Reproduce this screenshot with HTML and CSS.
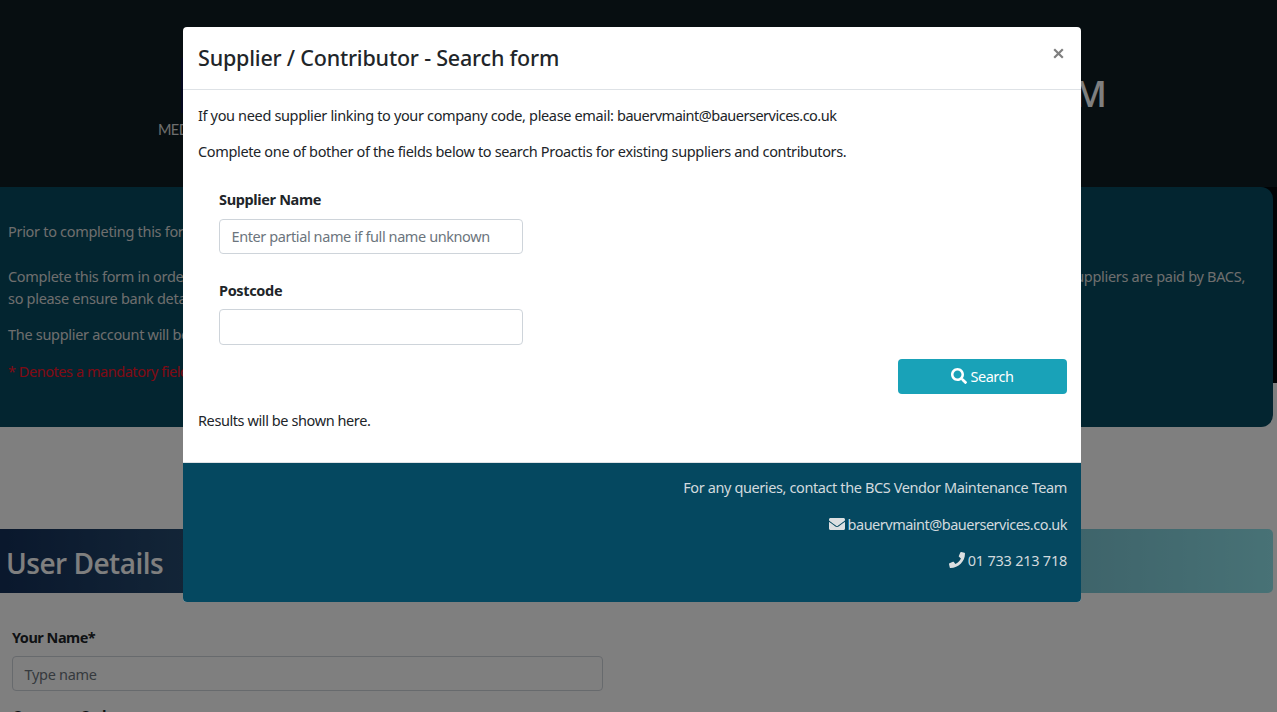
FILE: index.html
```html
<!DOCTYPE html>
<html lang="en">
<head>
<meta charset="utf-8">
<title>Supplier form</title>
<link rel="stylesheet" href="styles.css">
</head>
<body>
<div class="page">
  <div class="hero">
    <header class="banner">
      <div class="brand"><div class="brand-mark"></div><div class="brand-name">MEDIA</div></div>
      <h1 class="banner-title">FORM</h1>
    </header>
    <section class="intro">
      <p class="intro-first">Prior to completing this form</p>
      <p class="intro-wide"><span>Complete this form in order<br>so please ensure bank details</span><span class="paid">suppliers are paid by BACS,</span></p>
      <p>The supplier account will be</p>
      <p class="mandatory">* Denotes a mandatory field</p>
    </section>
  </div>
  <h2 class="section-bar"><span>User Details</span></h2>
  <form class="details">
    <label class="field-label">Your Name*</label>
    <div class="field"><span class="ph-name">Type name</span></div>
    <label class="field-label next-label">Company Code</label>
  </form>
</div>
<div class="backdrop">
  <div class="modal">
    <div class="modal-header">
      <h5 class="modal-title"><span>Supplier / Contributor - Search form</span></h5>
      <svg class="close" viewBox="0 0 11 11"><path d="M1.2 1.2 9.8 9.8M9.8 1.2 1.2 9.8"/></svg>
    </div>
    <div class="modal-body">
      <p><span class="t-link">If you need supplier linking to your company code, please email: </span><span class="t-mail">bauervmaint@bauerservices.co.uk</span></p>
      <p><span class="t-complete">Complete one of bother of the fields below to search Proactis for existing suppliers and contributors.</span></p>
      <div class="search-fields">
        <label class="field-label">Supplier Name</label>
        <div class="field"><span class="ph-partial">Enter partial name if full name unknown</span></div>
        <label class="field-label second">Postcode</label>
        <div class="field tall"></div>
      </div>
      <div class="button"><svg class="ico-search" viewBox="0 0 512 512"><path d="M505 442.700 405.300 343c-4.500-4.500-10.600-7-17-7H372c27.600-35.300 44-79.700 44-128C416 93.100 322.900 0 208 0S0 93.100 0 208s93.100 208 208 208c48.300 0 92.700-16.400 128-44v16.300c0 6.400 2.500 12.500 7 17l99.700 99.700c9.400 9.400 24.600 9.400 33.900 0l28.300-28.300c9.400-9.400 9.400-24.600.1-34zM208 336c-70.700 0-128-57.200-128-128 0-70.700 57.200-128 128-128 70.700 0 128 57.200 128 128 0 70.700-57.200 128-128 128z"/></svg><span class="t-search">Search</span></div>
      <p class="results"><span class="t-results">Results will be shown here.</span></p>
    </div>
    <div class="modal-footer">
      <p><span class="t-query">For any queries, contact the BCS Vendor Maintenance Team</span></p>
      <p><svg class="ico" viewBox="0 0 512 512"><path d="M502.300 190.800c3.900-3.100 9.700-.2 9.700 4.700V400c0 26.500-21.500 48-48 48H48c-26.500 0-48-21.500-48-48V195.600c0-5 5.700-7.800 9.700-4.700 22.400 17.400 52.100 39.500 154.100 113.600 21.100 15.400 56.700 47.800 92.200 47.600 35.700.3 72-32.800 92.300-47.600 102-74.100 131.600-96.300 154-113.700zM256 320c23.200.4 56.600-29.200 73.400-41.400 132.700-96.300 142.800-104.700 173.400-128.700 5.800-4.500 9.200-11.500 9.200-18.900v-19c0-26.500-21.500-48-48-48H48c-26.500 0-48 21.500-48 48v19c0 7.400 3.400 14.300 9.200 18.900 30.600 23.900 40.700 32.400 173.400 128.700 16.800 12.200 50.200 41.800 73.400 41.400z"/></svg><span class="t-mail">bauervmaint@bauerservices.co.uk</span></p>
      <p><svg class="ico" viewBox="0 0 512 512"><path d="M493.400 24.600l-104-24c-11.300-2.600-22.900 3.300-27.500 13.900l-48 112c-4.200 9.800-1.400 21.300 6.900 28l60.600 49.600c-36 76.700-98.900 140.500-177.200 177.200l-49.600-60.600c-6.800-8.300-18.200-11.100-28-6.900l-112 48C3.900 366.500-2 378.100.6 389.400l24 104C27.100 504.200 36.700 512 48 512c256.100 0 464-207.500 464-464 0-11.200-7.700-20.900-18.600-23.400z"/></svg><span class="t-phone">01 733 213 718</span></p>
    </div>
  </div>
</div>
</body>
</html>
```
FILE: styles.css
```css
* { box-sizing: border-box; }
body { margin: 0; font: 14.5px/22px "Noto Sans", sans-serif; color: #212529; background: #fff; }
p, h1, h2, h5 { margin: 0; }
.page { height: 712px; overflow: hidden; letter-spacing: -.3px; }
.hero { height: 427px; background: linear-gradient(#0e1d22 187px, #02070b 187px, #02070b 383px, #fff 383px); }
.banner { height: 187px; padding: 0 170px 0 158px; display: flex; justify-content: space-between; }
.brand { padding-top: 58px; width: 80px; }
.brand-mark { width: 58px; height: 55px; margin-left: 23px; background: #0b1040; }
.brand-name { margin-top: 6px; color: #ddd; font: 14.5px/22px Lato, sans-serif; letter-spacing: -.6px; }
.banner-title { padding-top: 70px; color: #fff; font: 600 36px/48px "Open Sans", sans-serif; letter-spacing: 0; }
.intro { width: 1273px; height: 240px; padding: 33px 28px 0 8px; border-radius: 0 12px 12px 0; background: #064a60; color: #ddd; }
.intro p { margin-bottom: 14px; white-space: nowrap; }
.intro .intro-first { margin-bottom: 23px; }
.intro-wide { display: flex; justify-content: space-between; }
.intro .mandatory { padding-top: 1px; color: #ff1428; letter-spacing: -.45px; }
.section-bar { width: 1273px; height: 64px; margin-top: 102px; padding: 10px 6px; border-radius: 0 5px 5px 0; background: linear-gradient(90deg, #14305a, #90e4ec); color: #fff; font: 600 28px/48px "Open Sans", sans-serif; letter-spacing: -.5px; }
.details { padding: 33px 12px 0; }
.field-label { display: block; font-weight: 700; line-height: 22px; letter-spacing: -.5px; }
.field { width: 591px; height: 35px; margin-top: 8px; padding: 0 11.5px; border: 1px solid #ced4da; border-radius: 4px; color: #6c757d; line-height: 35px; }
.next-label { margin-top: 13px; }
.backdrop { position: absolute; inset: 0; padding: 27px 0 0 183px; background: rgba(0,0,0,.5); overflow: hidden; }
.modal { width: 898px; height: 575px; overflow: hidden; border-radius: 4px; background: #fff; letter-spacing: -.35px; white-space: nowrap; }
.modal-header { height: 63px; padding: 15px 17px 0 15px; display: flex; justify-content: space-between; border-bottom: 1px solid #dee2e6; }
.modal-title { font: 500 21.5px/32px "Noto Sans", sans-serif; letter-spacing: -.2px; }
.close { width: 11px; height: 11px; margin-top: 6px; fill: none; stroke: #7f7f7f; stroke-width: 2.2; }
.modal-body { height: 373px; padding: 14px 14px 0 15px; border-bottom: 1px solid #dee2e6; }
.modal-body p { height: 36px; }
.t-link { letter-spacing: -.35px; }
.search-fields { width: 304px; margin: 12px 0 0 21px; }
.search-fields .field { width: 304px; margin-top: 9px; line-height: 33px; letter-spacing: -.41px; }
.search-fields .field-label { letter-spacing: -.35px; }
.search-fields .second { margin-top: 25px; }
.search-fields .tall { height: 36px; margin-top: 8px; }
.button { width: 169px; height: 35px; margin: 14px 0 0 auto; padding-bottom: 1px; display: flex; align-items: center; justify-content: center; gap: 3px; border-radius: 4px; background: #19a2b8; color: #fff; }
.t-search { line-height: 20px; padding-bottom: 1px; letter-spacing: -.45px; }
.ico-search { width: 16px; height: 16px; fill: #fff; }
.results { margin-top: 15px; }
.t-results { letter-spacing: -.41px; }
.modal-footer { height: 139px; padding: 13px 14px 0 0; background: #054860; color: #d2dade; }
.modal-footer p { height: 36.5px; display: flex; align-items: flex-start; justify-content: flex-end; gap: 3px; }
.t-query { letter-spacing: -.39px; }
.t-mail { letter-spacing: -.5px; }
.t-phone { letter-spacing: -.24px; }
.ico { width: 16px; height: 16px; margin-top: 3px; fill: #dcdfe1; }
```
